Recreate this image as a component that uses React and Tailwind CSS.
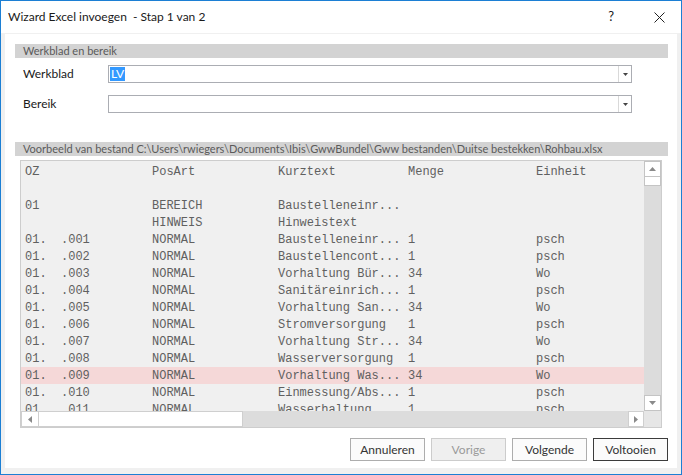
import React from "react"

const ui = { fontFamily: "Lato, 'Liberation Sans', sans-serif" }
const mono = { fontFamily: "'Liberation Mono', 'Courier New', monospace" }

const rows = [
  ["OZ", "PosArt", "Kurztext", "Menge", "Einheit"],
  ["", "", "", "", ""],
  ["01", "BEREICH", "Baustelleneinr...", "", ""],
  ["", "HINWEIS", "Hinweistext", "", ""],
  ["01.  .001", "NORMAL", "Baustelleneinr...", "1", "psch"],
  ["01.  .002", "NORMAL", "Baustellencont...", "1", "psch"],
  ["01.  .003", "NORMAL", "Vorhaltung Bür...", "34", "Wo"],
  ["01.  .004", "NORMAL", "Sanitäreinrich...", "1", "psch"],
  ["01.  .005", "NORMAL", "Vorhaltung San...", "34", "Wo"],
  ["01.  .006", "NORMAL", "Stromversorgung", "1", "psch"],
  ["01.  .007", "NORMAL", "Vorhaltung Str...", "34", "Wo"],
  ["01.  .008", "NORMAL", "Wasserversorgung", "1", "psch"],
  ["01.  .009", "NORMAL", "Vorhaltung Was...", "34", "Wo"],
  ["01.  .010", "NORMAL", "Einmessung/Abs...", "1", "psch"],
  ["01.  .011", "NORMAL", "Wasserhaltung", "1", "psch"],
]

function Arrow({ dir }) {
  const pts = {
    up: "0,4 3.5,0 7,4",
    down: "0,0 3.5,4 7,0",
    left: "4,0 0,3.5 4,7",
    right: "0,0 4,3.5 0,7",
  }[dir]
  const w = dir === "up" || dir === "down" ? 7 : 4
  const h = dir === "up" || dir === "down" ? 4 : 7
  return (
    <svg width={w} height={h} viewBox={`0 0 ${w} ${h}`}>
      <polygon points={pts} fill="#8a8a8a" />
    </svg>
  )
}

function Combo({ children }) {
  return (
    <div className="flex h-[18px] w-[524px] border border-[#abadb3] bg-white">
      <div className="flex flex-1 items-center pl-[1px]">{children}</div>
      <div className="flex w-[13px] items-center justify-center border-l border-[#d9d9d9]">
        <svg width="5" height="3" viewBox="0 0 5 3">
          <polygon points="0,0 5,0 2.5,3" fill="#444" />
        </svg>
      </div>
    </div>
  )
}

function SectionHeader({ children }) {
  return (
    <div className="ml-[10px] h-[14px] w-[653px] bg-[#d3d3d3] pl-[8px] text-[11px] leading-[14px] text-[#5a5a5a]">
      {children}
    </div>
  )
}

function Button({ children, disabled, primary }) {
  let cls = "h-[23px] w-[75px] text-[12px] font-normal border "
  if (disabled) cls += "border-[#cccccc] bg-[#efefef] text-[#9a9a9a]"
  else if (primary) cls += "border-[#3c3c3c] bg-[#fbfbfb] text-[#333333]"
  else cls += "border-[#adadad] bg-[#fbfbfb] text-[#333333]"
  return (
    <button className={cls} style={ui}>
      {children}
    </button>
  )
}

export default function App() {
  return (
    <div
      className="flex h-[475px] w-[682px] flex-col border border-[#1c7fd4] bg-[#f0f0f0]"
      style={ui}
    >
      {/* title bar */}
      <div className="flex h-[32px] items-center bg-white pl-[7px] pr-[16px] text-[12px] text-[#1a1a1a]">
        <span className="whitespace-pre">Wizard Excel invoegen  - Stap 1 van 2</span>
        <span className="ml-auto mr-[40px] text-[13px]">?</span>
        <svg width="11" height="11" viewBox="0 0 11 11">
          <path d="M0.5 0.5 L10.5 10.5 M10.5 0.5 L0.5 10.5" stroke="#222" strokeWidth="1" />
        </svg>
      </div>

      <div className="mx-[4px] mt-[1px] flex flex-1 flex-col bg-white pt-[10px]">
        <SectionHeader>Werkblad en bereik</SectionHeader>

        <div className="mt-[7px] flex items-center">
          <span className="w-[103px] pl-[18px] text-[12px] leading-[18px] text-[#1a1a1a]">Werkblad</span>
          <Combo>
            <span className="bg-[#3399ff] px-[1px] text-[12px] leading-[14px] text-white">LV</span>
          </Combo>
        </div>
        <div className="mt-[12px] flex items-center">
          <span className="w-[103px] pl-[18px] text-[12px] leading-[18px] text-[#1a1a1a]">Bereik</span>
          <Combo />
        </div>

        <div className="mt-[29px]">
          <SectionHeader>
            Voorbeeld van bestand C:\Users\rwiegers\Documents\Ibis\GwwBundel\Gww bestanden\Duitse bestekken\Rohbau.xlsx
          </SectionHeader>
        </div>

        {/* grid */}
        <div className="ml-[15px] mt-[4px] flex h-[268px] w-[642px] border border-[#cdcdcd] bg-[#f0f0f0]">
          <div className="flex w-[623px] flex-col">
            <div className="flex-1 overflow-hidden pt-[2px]" style={mono}>
              {rows.map((r, i) => (
                <div
                  key={i}
                  className={`flex h-[17px] items-center whitespace-pre pl-[4px] text-[12px] text-[#606060] ${
                    i === 12 ? "bg-[#f5d8d8]" : ""
                  }`}
                >
                  <span className="w-[127px]">{r[0]}</span>
                  <span className="w-[126px]">{r[1]}</span>
                  <span className="w-[130px]">{r[2]}</span>
                  <span className="w-[128px]">{r[3]}</span>
                  <span>{r[4]}</span>
                </div>
              ))}
            </div>
            {/* horizontal scrollbar */}
            <div className="flex h-[16px] bg-[#dcdcdc]">
              <div className="flex w-[222px] border border-[#cfcfcf] bg-white">
                <div className="flex w-[17px] items-center justify-center border-r border-[#cfcfcf]">
                  <Arrow dir="left" />
                </div>
              </div>
              <div className="flex-1" />
              <div className="flex w-[16px] items-center justify-center border border-[#cfcfcf] bg-white">
                <Arrow dir="right" />
              </div>
            </div>
          </div>
          {/* vertical scrollbar */}
          <div className="flex w-[17px] flex-col bg-[#dcdcdc]">
            <div className="flex h-[16px] items-center justify-center border border-[#c4c4c4] bg-white">
              <Arrow dir="up" />
            </div>
            <div className="h-[9px] border border-t-0 border-[#c4c4c4] bg-white" />
            <div className="flex-1" />
            <div className="flex h-[16px] items-center justify-center border border-[#c4c4c4] bg-white">
              <Arrow dir="down" />
            </div>
            <div className="h-[16px] bg-[#e6e6e6]" />
          </div>
        </div>

        <div className="mr-[9px] mt-[10px] flex justify-end gap-[6px]">
          <Button>Annuleren</Button>
          <Button disabled>Vorige</Button>
          <Button>Volgende</Button>
          <Button primary>Voltooien</Button>
        </div>
      </div>
      <div className="h-[6px]" />
    </div>
  )
}
